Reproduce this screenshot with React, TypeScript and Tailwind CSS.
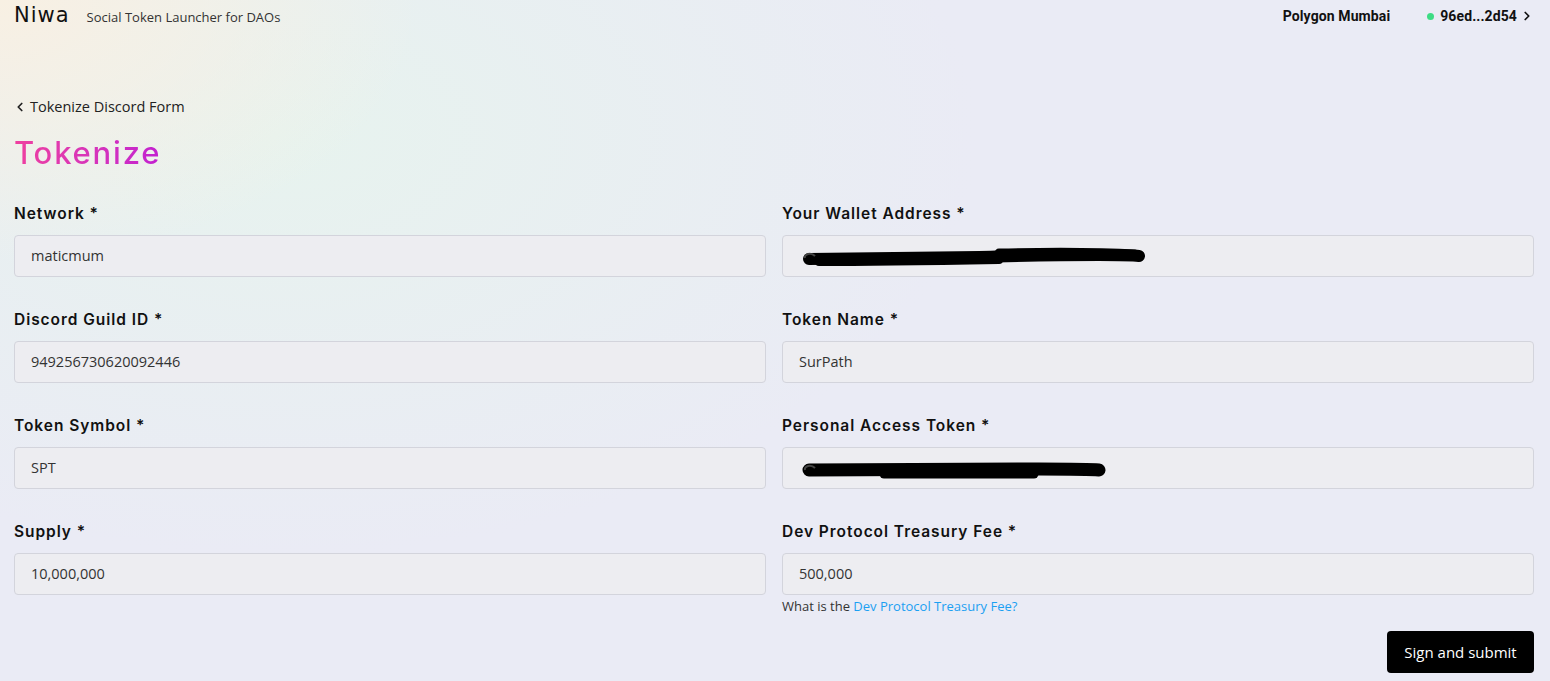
import { ChevronLeft, ChevronRight } from 'lucide-react';

const fields = [
  { label: 'Network *', value: 'maticmum' },
  { label: 'Your Wallet Address *', value: '', scribble: 'wallet' },
  { label: 'Discord Guild ID *', value: '949256730620092446' },
  { label: 'Token Name *', value: 'SurPath' },
  { label: 'Token Symbol *', value: 'SPT' },
  { label: 'Personal Access Token *', value: '', scribble: 'pat' },
  { label: 'Supply *', value: '10,000,000' },
  { label: 'Dev Protocol Treasury Fee *', value: '500,000', help: true },
];

function Scribble({ kind }: { kind: string }) {
  // hand-drawn redaction marks over secret values
  if (kind === 'wallet') {
    return (
      <svg width="350" height="30" viewBox="0 0 350 30" className="absolute left-[16px] top-[6px]">
        <path d="M10 17 C60 16 120 16 180 15 C220 14 250 13 300 13 C320 13 332 13 340 14" stroke="#000" strokeWidth="12" fill="none" strokeLinecap="round" />
        <path d="M20 20 C80 20 140 19 200 18" stroke="#000" strokeWidth="8" fill="none" strokeLinecap="round" />
        <path d="M200 11 C250 10 300 10 336 12" stroke="#000" strokeWidth="9" fill="none" strokeLinecap="round" />
        <path d="M6 16 C5 12 12 10 16 14" stroke="#444" strokeWidth="2" fill="none" />
      </svg>
    );
  }
  return (
    <svg width="310" height="30" viewBox="0 0 310 30" className="absolute left-[16px] top-[7px]">
      <path d="M10 15 C80 14 160 15 240 14 C270 14 290 14 300 15" stroke="#000" strokeWidth="13" fill="none" strokeLinecap="round" />
      <path d="M85 19 L235 19" stroke="#000" strokeWidth="9" fill="none" strokeLinecap="round" />
      <path d="M6 15 C5 11 12 9 16 13" stroke="#444" strokeWidth="2" fill="none" />
    </svg>
  );
}

export default function App() {
  return (
    <div
      className="min-h-[681px] w-full text-[#1a1a1a] bg-[#eaebf5] bg-[radial-gradient(ellipse_420px_260px_at_0%_0%,#f8f0e3_0%,rgba(248,240,227,0.6)_45%,rgba(234,235,245,0)_100%),radial-gradient(ellipse_700px_420px_at_18%_20%,#e7f3ee_0%,rgba(231,243,238,0.5)_50%,rgba(234,235,245,0)_100%)]"
      style={{ fontFamily: '"Open Sans", "Liberation Sans", sans-serif' }}
    >
      {/* Top bar */}
      <header className="h-[32px] flex items-center justify-between pl-[14px] pr-[16px]">
        <div className="flex items-baseline gap-[17px]">
          <span className="text-[21px] font-medium tracking-[1px] text-[#111]" style={{ fontFamily: '"DejaVu Sans", sans-serif' }}>
            Niwa
          </span>
          <span className="text-[13px] text-[#333]">Social Token Launcher for DAOs</span>
        </div>
        <div className="flex items-center text-[14px] font-bold text-[#111] tracking-[0.1px]" style={{ fontFamily: 'Roboto, sans-serif' }}>
          <span>Polygon Mumbai</span>
          <span className="ml-[37px] w-[7px] h-[7px] rounded-full bg-[#3ddc84]" />
          <span className="ml-[6px]">96ed...2d54</span>
          <ChevronRight className="ml-[3px] w-[14px] h-[14px]" strokeWidth={3} />
        </div>
      </header>

      <main className="pl-[14px] pr-[16px] pt-[64px]">
        <a className="flex items-center gap-[3px] text-[14.5px] text-[#222] cursor-pointer">
          <ChevronLeft className="w-[14px] h-[14px] -ml-[1px]" strokeWidth={3} />
          <span>Tokenize Discord Form</span>
        </a>

        <h1
          className="mt-[14px] text-[31px] leading-[42px] font-medium tracking-[1.8px] bg-gradient-to-r from-[#ef3f9f] to-[#c21fd0] bg-clip-text text-transparent w-fit"
          style={{ fontFamily: 'Inter, sans-serif' }}
        >
          Tokenize
        </h1>

        <div className="mt-[30px] grid grid-cols-2 gap-x-[16px] gap-y-[33px]">
          {fields.map((f) => (
            <div key={f.label} className="relative">
              <label
                className="block h-[20px] leading-[20px] text-[15.5px] font-semibold tracking-[0.95px] text-[#111]"
                style={{ fontFamily: 'Inter, sans-serif' }}
              >
                {f.label}
              </label>
              <div className="relative mt-[11px] h-[42px] rounded-[4px] border border-[#d3d4dc] bg-[#ededf1] flex items-center pl-[16px] text-[14.5px] text-[#333]">
                {f.value}
                {f.scribble && <Scribble kind={f.scribble} />}
              </div>
              {f.help && (
                <p className="absolute top-[75px] text-[13px] text-[#333]">
                  What is the <span className="text-[#1ba0f2]">Dev Protocol Treasury Fee?</span>
                </p>
              )}
            </div>
          ))}
        </div>

        <div className="flex justify-end mt-[36px]">
          <button className="h-[42px] w-[147px] rounded-[4px] bg-black text-white text-[15px]">
            Sign and submit
          </button>
        </div>
      </main>
    </div>
  );
}
